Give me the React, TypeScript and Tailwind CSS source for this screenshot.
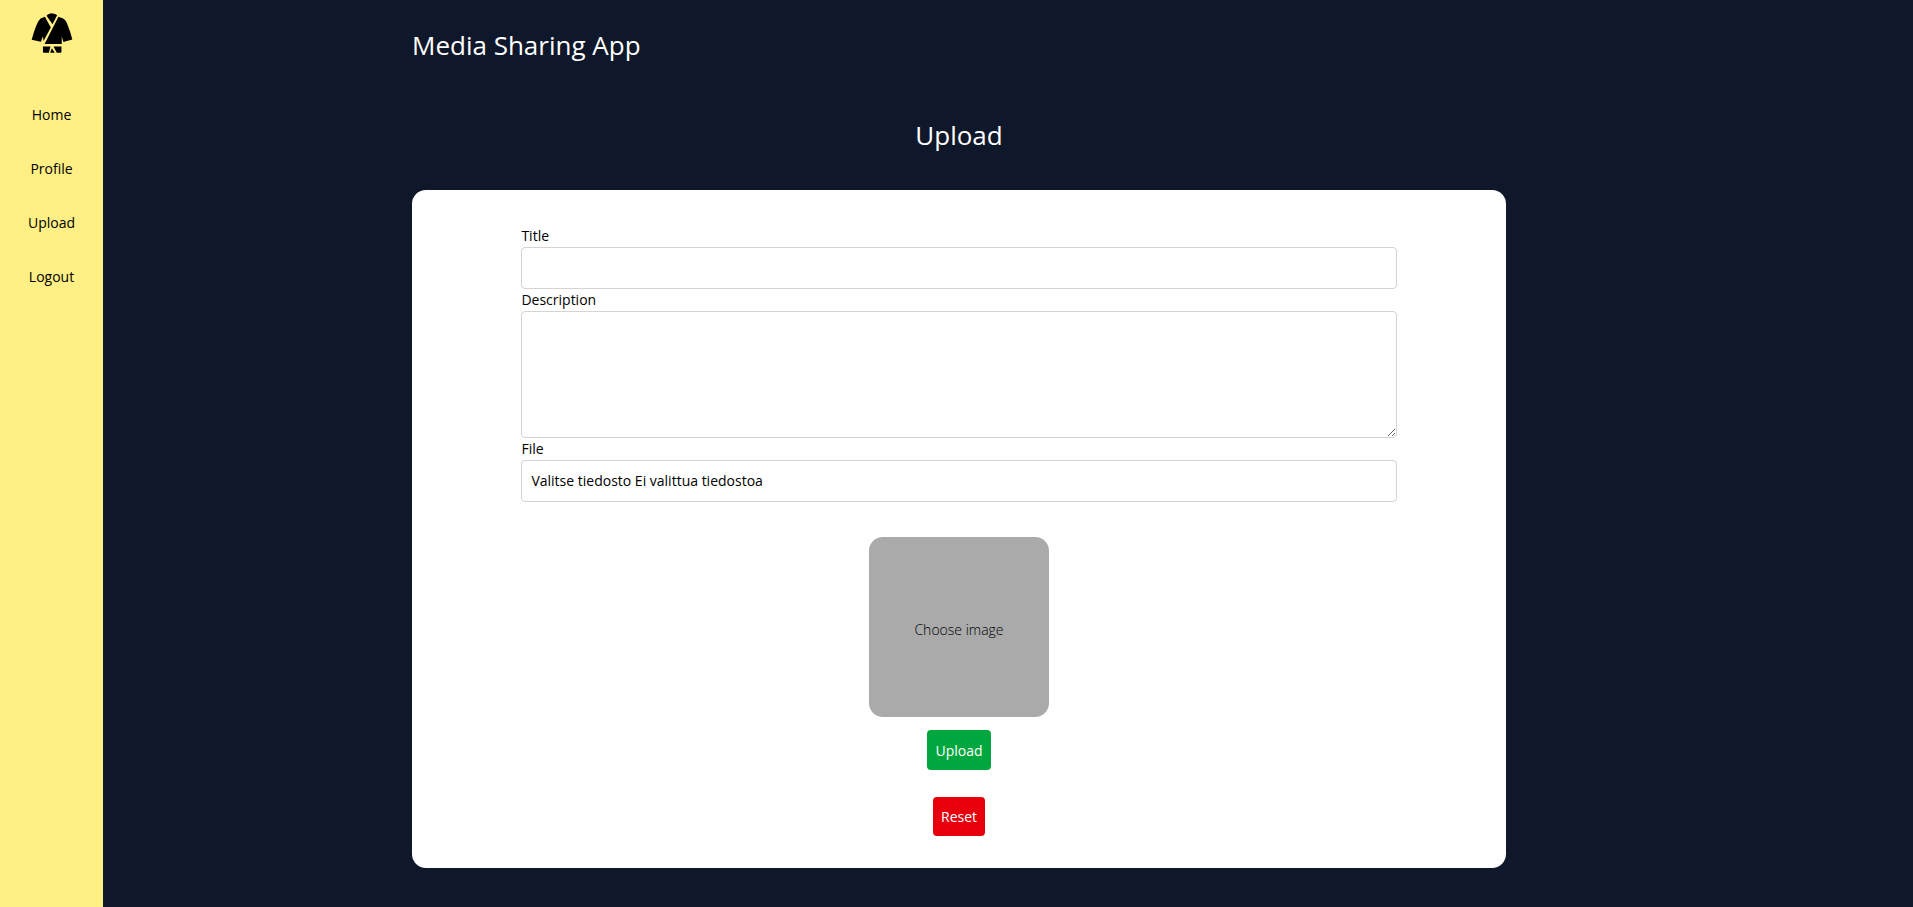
import { useState } from "react";

const links = ["Home", "Profile", "Upload", "Logout"];

function Logo() {
  return (
    <svg viewBox="92 39 125 121" className="h-10 w-[42px]" fill="#000" aria-hidden="true">
      <path d="M138 47 Q141 42 147 41 Q153 39 160 41 Q166 42 170 46 L156 73 Z" />
      <path d="M133 50 L151 83 L129 124 L127 110 L121 126 L93 120 Q99 97 107 77 Q112 63 120 56 Z" />
      <path d="M174 50 L188 56 Q197 61 202 76 Q210 95 216 119 L189 127 L184 110 V133 H132 Z" />
      <path d="M127 140 H150 L145 159 H130 Q127 159 127 156 Z" />
      <path d="M159 140 H183 V156 Q183 159 180 159 H169 Z" />
      <path d="M154 146 L163 159 H149 Z" />
    </svg>
  );
}

function Sidebar() {
  return (
    <nav className="flex flex-col items-center bg-[#ffef85] pt-[13px] text-black">
      <a href="#" aria-label="Start page">
        <Logo />
      </a>
      <ul className="flex w-full flex-col pt-[35px] text-center">
        {links.map((name) => (
          <li key={name}>
            <a href={"#" + name.toLowerCase()} className="block py-4 leading-[22px]">
              {name}
            </a>
          </li>
        ))}
      </ul>
    </nav>
  );
}

function UploadForm() {
  const [fileName, setFileName] = useState("Ei valittua tiedostoa");
  const field = "block w-full rounded-[4px] border border-[#d6d3d1] bg-white px-[9px] py-[10px]";
  return (
    <form
      className="flex flex-col items-center rounded-[14px] bg-white pt-[35px] pb-8 text-black"
      onSubmit={(e) => e.preventDefault()}
      onReset={() => setFileName("Ei valittua tiedostoa")}
    >
      <div className="w-4/5">
        <label htmlFor="title" className="block leading-[22px]">
          Title
        </label>
        <input id="title" name="title" type="text" className={field + " h-[42px]"} />
        <label htmlFor="description" className="block leading-[22px]">
          Description
        </label>
        <textarea id="description" name="description" rows={5} className={field + " h-[127px]"} />
        <label htmlFor="file" className="block leading-[22px]">
          File
        </label>
        <label className={field + " relative h-[42px] leading-5 focus-within:outline-2"}>
          Valitse tiedosto {fileName}
          <input
            id="file"
            name="file"
            type="file"
            accept="image/*"
            className="sr-only"
            onChange={(e) => setFileName(e.target.files?.[0]?.name ?? "Ei valittua tiedostoa")}
          />
        </label>
      </div>
      <div className="mt-[35px] flex size-[180px] items-center justify-center rounded-[14px] bg-[#aaaaaa] pt-1 font-light">
        Choose image
      </div>
      <button type="submit" className="mt-[13px] h-10 rounded-[4px] bg-[#00a63e] px-2 text-white">
        Upload
      </button>
      <button type="reset" className="mt-[27px] h-[39px] rounded-[4px] bg-[#e7000b] px-2 text-white">
        Reset
      </button>
    </form>
  );
}

export default function App() {
  return (
    <div className="grid min-h-screen grid-cols-[103px_309fr_1094fr_407fr] bg-[#0f172a] font-['Open_Sans','Noto_Sans',sans-serif] text-[14px] text-white">
      <Sidebar />
      <main className="col-start-3 pb-8">
        <h1 className="pt-[25px] text-[26px] leading-10">Media Sharing App</h1>
        <h2 className="pt-[50px] pb-[35px] text-center text-[26px] leading-10">Upload</h2>
        <UploadForm />
      </main>
    </div>
  );
}
